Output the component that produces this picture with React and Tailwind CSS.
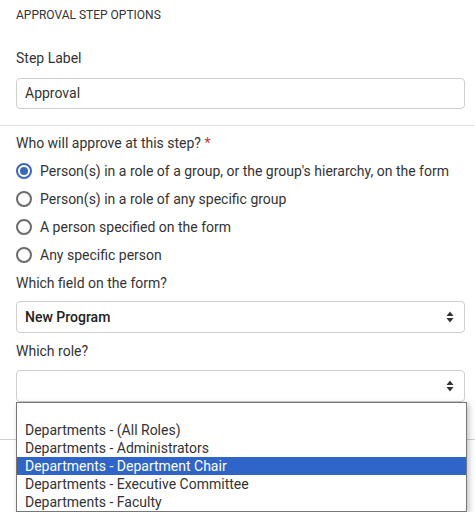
import React from 'react';

const options = [
    "Person(s) in a role of a group, or the group's hierarchy, on the form",
    'Person(s) in a role of any specific group',
    'A person specified on the form',
    'Any specific person',
];

const roles = [
    '',
    'Departments - (All Roles)',
    'Departments - Administrators',
    'Departments - Department Chair',
    'Departments - Executive Committee',
    'Departments - Faculty',
];

function Radio({ checked }) {
    return checked ? (
        <span className="w-4 h-4 rounded-full border-2 border-[#3b69b8] flex items-center justify-center shrink-0">
            <span className="w-2 h-2 rounded-full bg-[#3b69b8]" />
        </span>
    ) : (
        <span className="w-4 h-4 rounded-full border-2 border-[#6b6b6b] shrink-0" />
    );
}

function SortArrows() {
    return (
        <svg width="8" height="12" viewBox="0 0 8 12" className="shrink-0">
            <path d="M4 0.5 L7.5 5 H0.5 Z" fill="#333" />
            <path d="M4 11.5 L7.5 7 H0.5 Z" fill="#333" />
        </svg>
    );
}

export default function App() {
    return (
        <div className="w-[475px] h-[512px] overflow-hidden bg-white text-[#333] font-['Roboto',sans-serif] text-[14px] relative">
            {/* Step label section */}
            <section className="pl-4 pr-[10px] pt-[6px] pb-4 border-b border-[#e2e2e2]">
                <h2 className="text-[12px] uppercase leading-[18px]">Approval Step Options</h2>
                <label className="block mt-[25px] leading-[18px]">Step Label</label>
                <div className="mt-[11px] h-[31px] border border-[#cfcfcf] rounded-[4px] px-[8px] flex items-center">
                    Approval
                </div>
            </section>

            {/* Approver section */}
            <section className="pl-4 pr-[10px] pt-[8px]">
                <div className="leading-[18px]">
                    Who will approve at this step? <span className="text-[#c0392b]">*</span>
                </div>
                <div className="mt-[5px]">
                    {options.map((o, i) => (
                        <div key={o} className="h-[28px] flex items-center gap-[8px]">
                            <Radio checked={i === 0} />
                            <span>{o}</span>
                        </div>
                    ))}
                </div>
                <div className="mt-[5px] leading-[18px]">Which field on the form?</div>
                <div className="mt-[9px] h-[32px] border border-[#cfcfcf] rounded-[4px] pl-[8px] pr-[10px] flex items-center justify-between">
                    <span className="font-medium text-[#222]">New Program</span>
                    <SortArrows />
                </div>
                <div className="mt-[9px] leading-[18px]">Which role?</div>
                <div className="mt-[10px] h-[32px] border border-[#cfcfcf] rounded-[4px] pl-[8px] pr-[10px] flex items-center justify-end">
                    <SortArrows />
                </div>
            </section>

            <div className="mt-[37px] border-b border-[#cfcfcf]" />

            {/* Open dropdown list */}
            <ul className="absolute left-[16px] top-[402px] w-[451px] bg-white border border-[#777] shadow-[2px_2px_6px_rgba(0,0,0,0.25)]">
                {roles.map((r, i) => (
                    <li
                        key={i}
                        className={`h-[18px] leading-[18px] px-[8px] ${i === 3 ? 'bg-[#2f64c9] text-white' : 'text-[#333]'}`}
                    >
                        {r}
                    </li>
                ))}
            </ul>
        </div>
    );
}
